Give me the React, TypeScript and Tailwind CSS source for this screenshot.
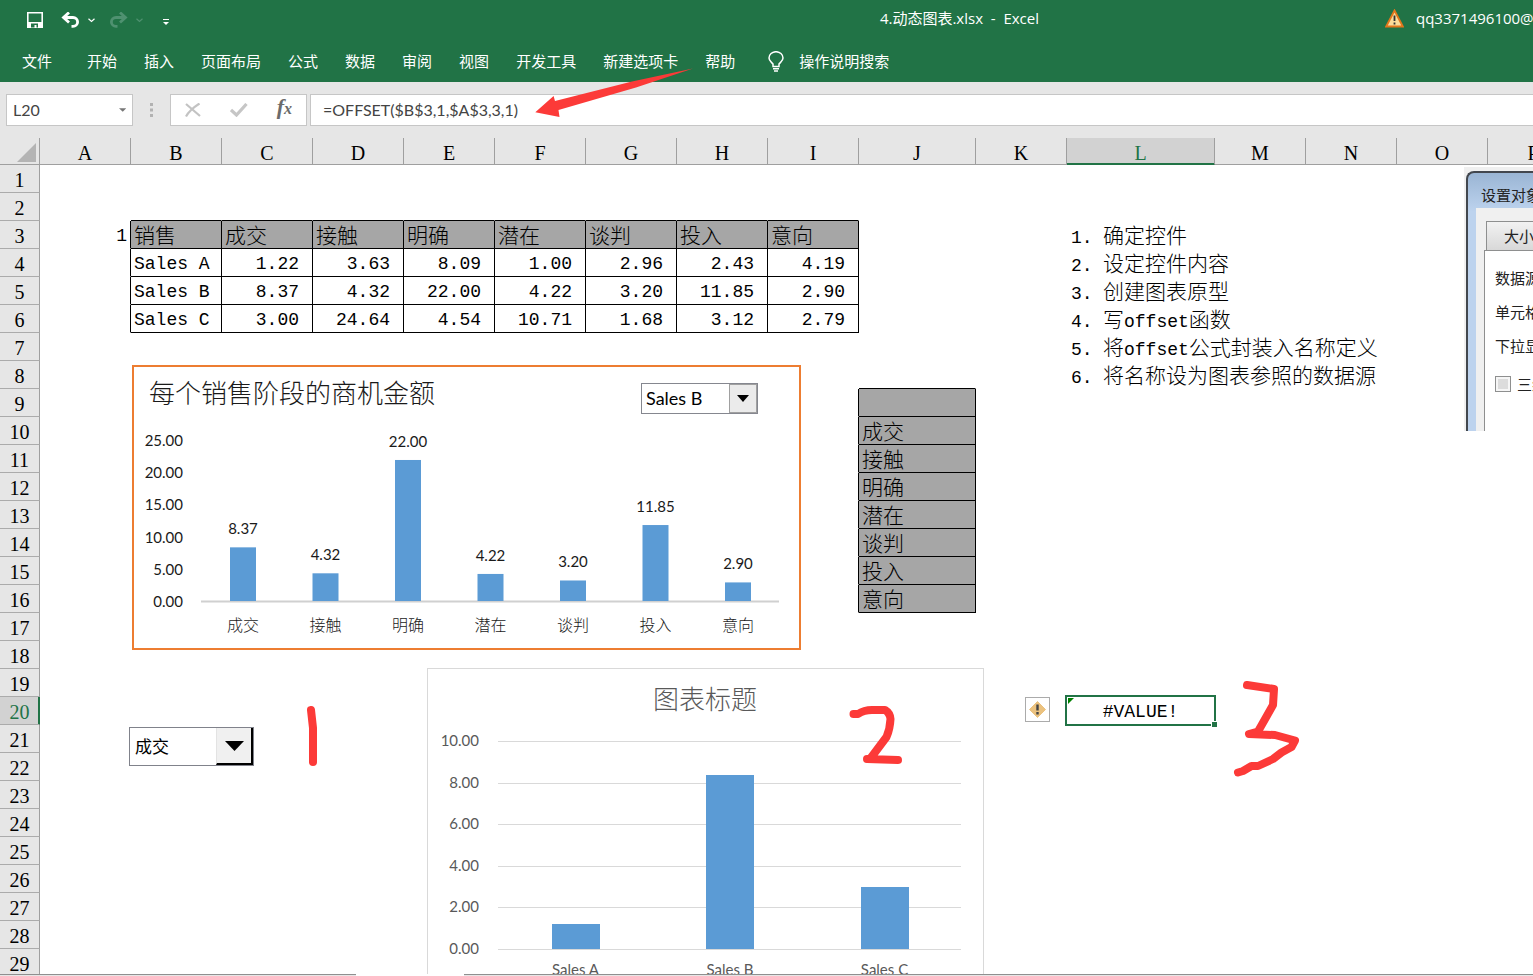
import type { ReactNode } from "react";
import clsx from "clsx";

const TABS = ["开始", "插入", "页面布局", "公式", "数据", "审阅", "视图", "开发工具", "新建选项卡", "帮助"];

const COLUMNS = [
  { key: "A", width: "w-[91px]" },
  { key: "B", width: "w-[91px]" },
  { key: "C", width: "w-[91px]" },
  { key: "D", width: "w-[91px]" },
  { key: "E", width: "w-[91px]" },
  { key: "F", width: "w-[91px]" },
  { key: "G", width: "w-[91px]" },
  { key: "H", width: "w-[91px]" },
  { key: "I", width: "w-[91px]" },
  { key: "J", width: "w-[117px]" },
  { key: "K", width: "w-[91px]" },
  { key: "L", width: "w-[148px]" },
  { key: "M", width: "w-[91px]" },
  { key: "N", width: "w-[91px]" },
  { key: "O", width: "w-[91px]" },
  { key: "P", width: "w-[91px]" },
];
const ROW_COUNT = 29;

const STAGES = ["成交", "接触", "明确", "潜在", "谈判", "投入", "意向"];
const SALES = [
  { name: "Sales A", values: [1.22, 3.63, 8.09, 1.0, 2.96, 2.43, 4.19] },
  { name: "Sales B", values: [8.37, 4.32, 22.0, 4.22, 3.2, 11.85, 2.9] },
  { name: "Sales C", values: [3.0, 24.64, 4.54, 10.71, 1.68, 3.12, 2.79] },
];

type Cell = { text: ReactNode; kind: "cjk" | "label" | "number" | "index" | "step" | "error" };

const latin = (s: string) => <span className="text-[18px]">{s}</span>;

const STEPS: ReactNode[] = [
  "确定控件",
  "设定控件内容",
  "创建图表原型",
  <>写{latin("offset")}函数</>,
  <>将{latin("offset")}公式封装入名称定义</>,
  "将名称设为图表参照的数据源",
];

function buildCells() {
  const cells: Record<string, Cell> = {};
  cells.A3 = { text: "1", kind: "index" };
  cells.B3 = { text: "销售", kind: "cjk" };
  STAGES.forEach((s, i) => {
    cells[`${COLUMNS[i + 2].key}3`] = { text: s, kind: "cjk" };
    cells[`J${10 + i}`] = { text: s, kind: "cjk" };
  });
  SALES.forEach((row, r) => {
    cells[`B${4 + r}`] = { text: row.name, kind: "label" };
    row.values.forEach((v, i) => {
      cells[`${COLUMNS[i + 2].key}${4 + r}`] = { text: v.toFixed(2), kind: "number" };
    });
  });
  STEPS.forEach((s, i) => {
    cells[`L${3 + i}`] = {
      kind: "step",
      text: (
        <>
          <span className="inline-block w-8 text-[18px]">{i + 1}.</span>
          {s}
        </>
      ),
    };
  });
  cells.L20 = { text: "#VALUE!", kind: "error" };
  return cells;
}

const CELLS = buildCells();

const inSales = (c: number, r: number) => c >= 1 && c <= 8 && r >= 3 && r <= 6;
const inStages = (c: number, r: number) => c === 9 && r >= 9 && r <= 16;
const boxed = (c: number, r: number) => inSales(c, r) || inStages(c, r);

/* ---------- ribbon ---------- */

function SaveIcon() {
  return (
    <svg width="16" height="16" viewBox="0 0 16 16" fill="none" aria-hidden="true">
      <path d="M0.8 0.8h14.4v14.4H0.8z" stroke="#fff" strokeWidth="1.6" />
      <path d="M0 10h16v6H0z" fill="#fff" />
      <path d="M4 11.5h7v4H9.5v-2.5H7.5v2.5H4z" fill="#217346" />
    </svg>
  );
}

function UndoIcon({ flipped }: { flipped?: boolean }) {
  return (
    <svg width="19" height="16" viewBox="0 0 19 16" fill="none" aria-hidden="true" className={flipped ? "-scale-x-100" : ""}>
      <path d="M8 0.5L2.5 5.5L8 10.5M2.5 5.5H12a4.6 4.4 0 0 1 0 8.8H10.5" stroke="currentColor" strokeWidth="2.8" />
    </svg>
  );
}

function SmallChevron() {
  return (
    <svg width="7" height="5" viewBox="0 0 7 5" fill="none" aria-hidden="true">
      <path d="M0.5 0.8L3.5 3.5L6.5 0.8" stroke="currentColor" strokeWidth="1.2" />
    </svg>
  );
}

function TitleBar() {
  return (
    <div className="flex h-10 items-center text-[15px] text-white">
      <div className="flex flex-1 items-center pl-[27px]">
        <button type="button" aria-label="保存"><SaveIcon /></button>
        <button type="button" aria-label="撤消" className="ml-[18px]"><UndoIcon /></button>
        <button type="button" aria-label="撤消选项" className="ml-2"><SmallChevron /></button>
        <button type="button" aria-label="恢复" className="ml-[14px] text-[#4f9170]"><UndoIcon flipped /></button>
        <button type="button" aria-label="恢复选项" className="ml-2 text-[#4f9170]"><SmallChevron /></button>
        <button type="button" aria-label="自定义快速访问工具栏" className="ml-5 pt-1">
          <svg width="6" height="8" viewBox="0 0 6 8" aria-hidden="true">
            <path d="M0 1.500h6" stroke="#fff" />
            <path d="M0 4h6L3 7z" fill="#fff" />
          </svg>
        </button>
      </div>
      <h1 className="whitespace-pre pb-1">4.动态图表.xlsx  -  Excel</h1>
      <div className="ml-[346px] flex w-[148px] shrink-0 items-center gap-3 overflow-hidden pb-1">
        <svg width="19" height="19" viewBox="0 0 19 19" className="shrink-0" aria-hidden="true">
          <path d="M9.5 1.5L17.8 17.500H1.2z" fill="#fbdc9a" stroke="#e2771c" strokeWidth="1.8" />
          <path d="M9.5 6.5v5.500M9.5 13.5v2" stroke="#333" strokeWidth="1.8" />
        </svg>
        <span>qq3371496100@</span>
      </div>
    </div>
  );
}

function Tabs() {
  return (
    <nav className="flex h-[42px] items-center gap-[27px] whitespace-nowrap pl-[22px] text-[15px] text-white">
      <button type="button" className="mr-2">文件</button>
      {TABS.map((t) => (
        <button key={t} type="button">{t}</button>
      ))}
      <button type="button" className="ml-[6px] flex items-center gap-[15px]">
        <svg width="16" height="21" viewBox="0 0 16 21" fill="none" stroke="#fff" strokeWidth="1.5" aria-hidden="true">
          <path d="M5 15.5v-2.500C3.5 11 1 10 1 7a7 6.3 0 0 1 14 0c0 3-2.5 4-4 6v2.500zM5 17.8h6M6 20h4" />
        </svg>
        操作说明搜索
      </button>
    </nav>
  );
}

function FormulaBar() {
  return (
    <div className="flex h-14 items-center bg-[#e6e6e6] pl-[6px] font-[Lato,'Noto_Sans_CJK_SC',sans-serif] text-[#444]">
      <div className="flex h-8 w-[127px] items-center border border-[#c6c6c6] bg-white px-[6px]">
        <input aria-label="名称框" defaultValue="L20" className="w-full min-w-0 bg-transparent text-base outline-none" />
        <svg width="8" height="4" viewBox="0 0 8 4" aria-hidden="true"><path d="M0 0h8L4 4z" fill="#777" /></svg>
      </div>
      <svg width="3" height="14" viewBox="0 0 3 14" className="mx-[17px]" aria-hidden="true">
        <path d="M0 0h3v3H0zM0 5.5h3v3H0zM0 11h3v3H0z" fill="#b2b2b2" />
      </svg>
      <div className="flex h-8 w-[137px] items-center justify-between border border-[#c6c6c6] bg-white pl-[14px] pr-[14px]">
        <button type="button" aria-label="取消">
          <svg width="16" height="14" viewBox="0 0 16 14" fill="none" aria-hidden="true">
            <path d="M1 1L15 13M14.5 0.5C9 4 4 8 1 13.5" stroke="#c3c3c3" strokeWidth="2.2" />
          </svg>
        </button>
        <button type="button" aria-label="输入">
          <svg width="18" height="14" viewBox="0 0 18 14" fill="none" aria-hidden="true">
            <path d="M1 7L6.5 12L16.5 1" stroke="#c6c6c6" strokeWidth="3.2" />
          </svg>
        </button>
        <button type="button" aria-label="插入函数" className="pb-1 font-['Liberation_Serif',serif] text-[22px] font-bold italic leading-6 text-[#6b6b6b]">
          f<span className="text-base">x</span>
        </button>
      </div>
      <input
        aria-label="编辑栏"
        defaultValue="=OFFSET($B$3,1,$A$3,3,1)"
        className="ml-[3px] h-8 min-w-0 flex-1 border border-r-0 border-[#c6c6c6] bg-white pb-0.5 pl-3 text-base outline-none"
      />
    </div>
  );
}

/* ---------- grid ---------- */

function Grid() {
  return (
    <table className="w-full min-w-max table-fixed border-separate border-spacing-0 font-['Liberation_Mono','Noto_Sans_CJK_SC',monospace] text-[18px] leading-6 text-black">
      <colgroup>
        <col className="w-[40px]" />
        {COLUMNS.map((c) => (
          <col key={c.key} className={c.width} />
        ))}
      </colgroup>
      <thead>
        <tr className="h-[27px] bg-[#e6e6e6] font-['Liberation_Serif',serif] text-xl leading-[22px]">
          <th scope="col" className="border-b border-r border-[#9f9f9f] p-0 pt-[3px]">
            <svg width="19" height="19" viewBox="0 0 19 19" className="ml-auto mr-[3px] block" aria-label="全选">
              <path d="M19 0v19H0z" fill="#b4b4b4" />
            </svg>
          </th>
          {COLUMNS.map((c) => (
            <th
              key={c.key}
              scope="col"
              className={clsx(
                "border-b border-r p-0 pt-1 font-normal",
                c.key === "L"
                  ? "border-r-[#9f9f9f] border-b-[#217346] bg-[#d2d2d2] text-[#217346] shadow-[inset_0_-1px_0_#217346]"
                  : "border-[#9f9f9f]",
              )}
            >
              {c.key}
            </th>
          ))}
        </tr>
      </thead>
      <tbody>
        {Array.from({ length: ROW_COUNT }, (_, i) => i + 1).map((r) => (
          <tr key={r} className="h-7">
            <th
              scope="row"
              className={clsx(
                "border-b border-r border-b-[#ababab] p-0 pt-1 font-['Liberation_Serif',serif] text-xl leading-[23px] font-normal",
                r === 20 ? "border-r-[#217346] bg-[#d2d2d2] text-[#217346] shadow-[inset_-1px_0_0_#217346]" : "border-r-[#9f9f9f] bg-[#e6e6e6]",
              )}
            >
              {r}
            </th>
            {COLUMNS.map((c, ci) => {
              const cell = CELLS[`${c.key}${r}`];
              const kind = cell?.kind;
              const chinese = kind === "cjk" || kind === "step";
              return (
                <td
                  key={c.key}
                  className={clsx(
                    "whitespace-nowrap border-b border-r p-0",
                    boxed(ci, r) || boxed(ci + 1, r) ? "border-r-black" : "border-r-transparent",
                    boxed(ci, r) || boxed(ci, r + 1) ? "border-b-black" : "border-b-transparent",
                    (inStages(ci, r) || (inSales(ci, r) && r === 3)) && "bg-[#a6a6a6]",
                    chinese ? "pt-[6px] text-[21px] leading-5 font-light" : "pt-0.5",
                    kind === "cjk" && "pl-[3px]",
                    kind === "label" && "pl-[3px]",
                    kind === "number" && "pr-[13px] text-right",
                    kind === "index" && "pr-[3px] text-right",
                    kind === "step" && "pl-1",
                    kind === "error" && "text-center",
                  )}
                >
                  {cell?.text}
                </td>
              );
            })}
          </tr>
        ))}
      </tbody>
    </table>
  );
}

/* ---------- floating objects ---------- */

function StageChart() {
  const values = SALES[1].values;
  const base = 236;
  const unit = 6.41;
  return (
    <section className="absolute left-[132px] top-[227px] h-[285px] w-[669px] border-2 border-[#ed7d31] bg-white">
      <svg
        width="665"
        height="281"
        viewBox="2 2 665 281"
        className="font-[Lato,'Noto_Sans_CJK_SC',sans-serif] text-[15px]"
        fill="#1a1a1a"
        role="img"
        aria-label="每个销售阶段的商机金额"
      >
        <text x="17" y="38" className="text-[26px] font-light">每个销售阶段的商机金额</text>
        {[0, 5, 10, 15, 20, 25].map((v) => (
          <text key={v} x="51" y={242 - v * 6.45} textAnchor="end">{v.toFixed(2)}</text>
        ))}
        <path d="M69 236.5H647" stroke="#d0d0d0" strokeWidth="2" />
        {values.map((v, i) => {
          const cx = 111 + i * 82.5;
          return (
            <g key={STAGES[i]}>
              <rect x={cx - 13} y={base - v * unit} width="26" height={v * unit} fill="#5b9bd5" />
              <text x={cx} y={base - v * unit - 13} textAnchor="middle">{v.toFixed(2)}</text>
              <text x={cx} y="266" textAnchor="middle" className="text-base font-light">{STAGES[i]}</text>
            </g>
          );
        })}
      </svg>
      <div className="absolute left-[507px] top-4 flex h-[31px] w-[117px] border border-[#85878f] bg-white">
        <select
          aria-label="销售"
          defaultValue="Sales B"
          className="w-full appearance-none pl-1 font-[Lato,sans-serif] text-[18px] text-black outline-none"
        >
          {SALES.map((s) => (
            <option key={s.name}>{s.name}</option>
          ))}
        </select>
        <span className="pointer-events-none absolute right-0 top-0 flex h-full w-7 items-center justify-center border border-[#a0a0a0] bg-[#ebebeb]">
          <svg width="12" height="7" viewBox="0 0 12 7" aria-hidden="true"><path d="M0 0h12L6 7z" /></svg>
        </span>
      </div>
    </section>
  );
}

function SalesChart() {
  const base = 281;
  const unit = 20.8;
  return (
    <section className="absolute left-[427px] top-[530px] h-[340px] w-[557px] border border-[#d9d9d9] bg-white">
      <svg
        width="555"
        height="338"
        viewBox="1 1 555 338"
        className="font-[Lato,'Noto_Sans_CJK_SC',sans-serif] text-[15px]"
        fill="#595959"
        role="img"
        aria-label="图表标题"
      >
        <text x="278" y="41" textAnchor="middle" className="text-[26px] font-light">图表标题</text>
        {[0, 2, 4, 6, 8, 10].map((v) => (
          <g key={v}>
            <path d={`M71 ${Math.round(base - v * unit) + 0.5}H534`} stroke="#d9d9d9" />
            <text x="52" y={base - v * unit + 5} textAnchor="end">{v.toFixed(2)}</text>
          </g>
        ))}
        {[1.2, 8.37, 2.98].map((v, i) => (
          <g key={SALES[i].name}>
            <rect x={Math.floor(125 + i * 154.5)} y={Math.round(base - v * unit)} width="48" height={Math.round(v * unit)} fill="#5b9bd5" />
            <text x={148.5 + i * 154.5} y="307" textAnchor="middle">{SALES[i].name}</text>
          </g>
        ))}
      </svg>
    </section>
  );
}

function StageCombo() {
  return (
    <div className="absolute left-[129px] top-[589px] flex h-[39px] w-[125px] border border-[#80828b] bg-white">
      <select
        aria-label="销售阶段"
        defaultValue="成交"
        className="w-full appearance-none pl-[5px] text-[17px] text-black outline-none"
      >
        {STAGES.map((s) => (
          <option key={s}>{s}</option>
        ))}
      </select>
      <span className="pointer-events-none absolute right-0 top-0 flex h-full w-[37px] items-center justify-center border-b-2 border-l border-r-2 border-b-black border-l-[#e3e3e3] border-r-black bg-[#f0f0f0]">
        <svg width="19" height="10" viewBox="0 0 19 10" aria-hidden="true"><path d="M0 0h19L9.5 10z" /></svg>
      </span>
    </div>
  );
}

function ActiveCell() {
  return (
    <>
      <button
        type="button"
        aria-label="错误检查选项"
        className="absolute left-[1025px] top-[559px] flex size-[25px] items-center justify-center border border-[#ababab] bg-white"
      >
        <svg width="17" height="17" viewBox="0 0 17 17" aria-hidden="true">
          <path d="M8.5 0.5L16.5 8.5L8.5 16.5L0.5 8.5z" fill="#ebc27f" stroke="#ebc27f" strokeLinejoin="round" />
          <path d="M8.5 3.5v6M8.5 11v2.500" stroke="#444" strokeWidth="2.4" />
        </svg>
      </button>
      <div className="pointer-events-none absolute left-[1065px] top-[557px] h-[31px] w-[151px] border-2 border-[#217346]">
        <svg width="6" height="6" viewBox="0 0 6 6" className="ml-px mt-px" aria-hidden="true">
          <path d="M0 0h6L0 6z" fill="#008000" />
        </svg>
        <span className="absolute -bottom-[3px] -right-[3px] size-[6px] border-l border-t border-white bg-[#217346]" />
      </div>
    </>
  );
}

function ControlDialog() {
  return (
    <section className="absolute right-0 top-[29px] h-[264px] w-[69px] overflow-hidden bg-[#f0f0f0] pl-0.5 pt-1 text-[15px] text-[#222]">
      <div className="h-[260px] w-[200px] rounded-tl-lg border-l-2 border-t-2 border-[#42474e] bg-linear-to-b from-[#9ab5d4] to-[#bdd3ee] to-15% pl-2">
        <h2 className="h-[35px] whitespace-nowrap pl-[5px] pt-[10px] leading-6">设置对象格式</h2>
        <div className="h-[223px] bg-[#f0f0f0] pl-[10px] pt-[13px]">
          <button
            type="button"
            className="block h-[29px] w-20 border border-b-0 border-[#8e8f8f] bg-linear-to-b from-[#f2f2f2] to-[#d8d8d8] pl-[17px] text-left whitespace-nowrap"
          >
            大小
          </button>
          <div className="-ml-0.5 flex h-[182px] flex-col gap-[10px] whitespace-nowrap border-l border-t border-[#8e8f8f] bg-white pl-[10px] pt-[15px] leading-6">
            <p>数据源区域</p>
            <p>单元格链接</p>
            <p>下拉显示项数</p>
            <label className="flex items-center gap-[6px] pt-1">
              <input type="checkbox" className="size-4 shrink-0 appearance-none border border-[#8e8f8f] bg-[#dcdcdc] shadow-[inset_0_0_0_2px_#f6f6f6]" />
              三维阴影
            </label>
          </div>
        </div>
      </div>
    </section>
  );
}

function Annotations() {
  return (
    <svg
      width="1533"
      height="976"
      viewBox="0 0 1533 976"
      className="pointer-events-none absolute left-0 top-0"
      fill="none"
      stroke="#fc3a38"
      strokeWidth="8"
      strokeLinecap="round"
      strokeLinejoin="round"
      aria-hidden="true"
    >
      <path d="M535.3 112.3L553.6 96L555 101L632 81.5L693 68.6L636 87.5L558.5 110L559.5 117z" fill="#fc3a38" stroke="none" />
      <path d="M311 710L313 728V762" />
      <path d="M853.5 714H858Q864 710 872 710H885Q890 713 890.5 719Q890 729 886.5 737L870 759H867L898 760" />
      <path d="M1247 685L1274 689L1273 705L1258 731.5L1249 734L1275 735L1295 740.5L1291.5 747L1281.5 752.5L1273 759L1258 766H1251.5L1243 771L1238 772.5" />
    </svg>
  );
}

export default function App() {
  return (
    <div className="relative flex h-screen flex-col overflow-hidden bg-white font-['Open_Sans','Noto_Sans_CJK_SC',sans-serif]">
      <header className="shrink-0">
        <div className="bg-[#217346]">
          <TitleBar />
          <Tabs />
        </div>
        <FormulaBar />
      </header>
      <main className="relative min-h-0 flex-1 overflow-hidden">
        <Grid />
        <StageChart />
        <SalesChart />
        <StageCombo />
        <ActiveCell />
        <ControlDialog />
      </main>
      <footer className="flex h-0.5 shrink-0 justify-between">
        <div className="w-[356px] border-t border-[#8f8f8f] bg-[#e6e6e6]" />
        <div className="ml-[108px] flex-1 border-t border-[#8f8f8f] bg-[#e6e6e6]" />
      </footer>
      <Annotations />
    </div>
  );
}
